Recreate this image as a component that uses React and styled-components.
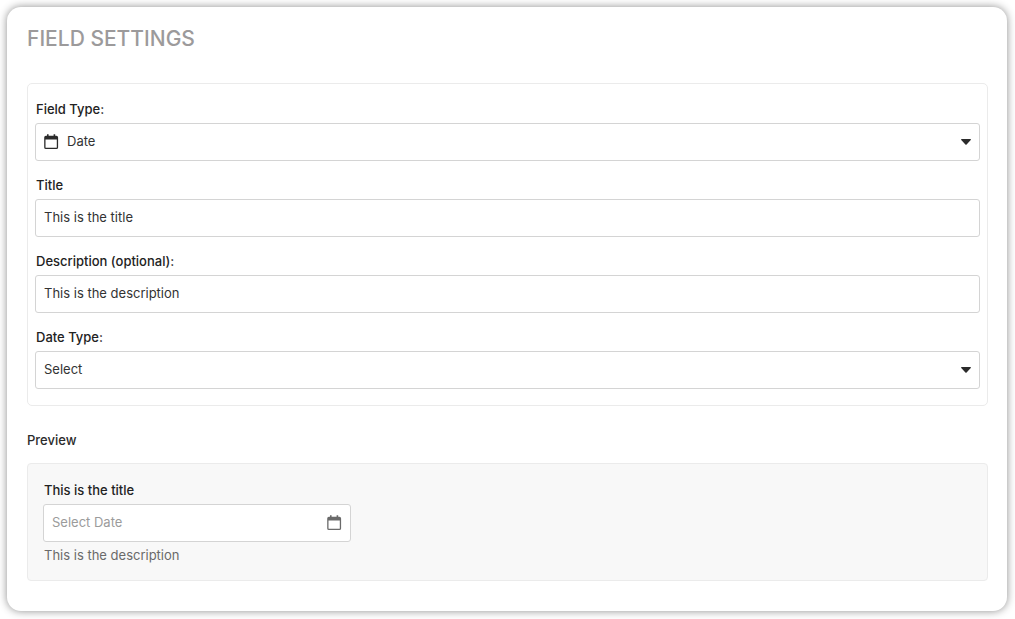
import React from "react";
import styled, { createGlobalStyle, css } from "styled-components";

const GlobalStyle = createGlobalStyle`
  *, *::before, *::after { box-sizing: border-box; }
  body {
    margin: 0;
    background: #fff;
    color: #2b2b2b;
    font-family: Inter, "Liberation Sans", sans-serif;
    font-size: 13px;
    line-height: 20px;
  }
`;

const Card = styled.main`
  margin: 7px 8px 8px 7px;
  padding: 18px 19px 30px 20px;
  background: #fff;
  border-radius: 14px;
  box-shadow: 0 0 9px rgba(0, 0, 0, 0.45);
`;

const Heading = styled.h1`
  margin: 0 0 30px;
  color: #9c9a9b;
  font-size: 21px;
  font-weight: 500;
  line-height: 28px;
  text-transform: uppercase;
`;

const Panel = styled.form`
  display: flex;
  flex-direction: column;
  gap: 14px;
  padding: 15px 7px 16px;
  border: 1px solid #ebebeb;
  border-radius: 5px;
`;

const PreviewHeading = styled.h2`
  margin: 24px 0 13px;
  font-size: 13px;
  font-weight: 500;
  line-height: 20px;
`;

const PreviewPanel = styled.section`
  padding: 16px 15px 15px;
  background: #f8f8f8;
  border: 1px solid #ebebeb;
  border-radius: 4px;
`;

const Field = styled.div`
  display: flex;
  flex-direction: column;
  gap: 4px;
  width: ${(p) => p.$width || "100%"};
  max-width: 100%;
`;

const Label = styled.label`
  padding-left: 1px;
  color: #222;
  font-weight: 500;
`;

const ControlWrap = styled.div`
  position: relative;
  display: flex;
  color: ${(p) => p.$color || "#2b2b2b"};
`;

const controlStyle = css`
  width: 100%;
  height: 38px;
  margin: 0;
  padding: 0 8px 2px;
  border: 1px solid #d4d4d4;
  border-radius: 3px;
  background: #fff;
  color: #333;
  font: inherit;
  outline: none;
  &:focus-visible { border-color: #777; }
`;

const Input = styled.input`
  ${controlStyle}
  &::placeholder { color: #9b9b9b; opacity: 1; }
`;

const Select = styled.select`
  ${controlStyle}
  appearance: none;
  padding-left: ${(p) => (p.$icon ? "31px" : "8px")};
  padding-right: 28px;
`;

const Adornment = styled.span`
  position: absolute;
  top: 0;
  bottom: 0;
  ${(p) => p.$side}: 9px;
  display: flex;
  align-items: center;
  pointer-events: none;
`;

const Hint = styled.p`
  margin: 3px 0 0;
  padding-left: 1px;
  color: #6a6a6a;
`;

const CalendarIcon = () => (
  <svg width="15" height="16" viewBox="0 0 15 16" aria-hidden="true">
    <path
      fill="currentColor"
      fillRule="evenodd"
      d="M3 0.300h1.600v1.400h5V0.300h1.600v1.400H12.400A1.700 1.700 0 0 1 14.100 3.400v10a1.700 1.700 0 0 1-1.700 1.700H1.900A1.700 1.700 0 0 1 0.200 13.400v-10A1.700 1.700 0 0 1 1.900 1.700H3zM1.500 5.500v7.700a0.600 0.600 0 0 0 0.600 0.600h10.100a0.600 0.600 0 0 0 0.600-0.600V5.500z"
    />
  </svg>
);

const Caret = () => (
  <svg width="10" height="6" viewBox="0 0 10 6" aria-hidden="true">
    <path
      fill="currentColor"
      d="M0.700 0h8.600a0.600 0.600 0 0 1 0.450 1L5.600 5.500a0.900 0.900 0 0 1-1.200 0L0.250 1A0.600 0.600 0 0 1 0.700 0z"
    />
  </svg>
);

export default function App() {
  return (
    <>
      <GlobalStyle />
      <Card>
        <Heading>Field Settings</Heading>
        <Panel>
          <Field>
            <Label htmlFor="field-type">Field Type:</Label>
            <ControlWrap>
              <Select id="field-type" $icon defaultValue="date">
                <option value="date">Date</option>
              </Select>
              <Adornment $side="left"><CalendarIcon /></Adornment>
              <Adornment $side="right"><Caret /></Adornment>
            </ControlWrap>
          </Field>
          <Field>
            <Label htmlFor="field-title">Title</Label>
            <Input id="field-title" type="text" defaultValue="This is the title" />
          </Field>
          <Field>
            <Label htmlFor="field-description">Description (optional):</Label>
            <Input id="field-description" type="text" defaultValue="This is the description" />
          </Field>
          <Field>
            <Label htmlFor="date-type">Date Type:</Label>
            <ControlWrap>
              <Select id="date-type" defaultValue="">
                <option value="">Select</option>
              </Select>
              <Adornment $side="right"><Caret /></Adornment>
            </ControlWrap>
          </Field>
        </Panel>
        <PreviewHeading>Preview</PreviewHeading>
        <PreviewPanel>
          <Field $width="308px">
            <Label htmlFor="preview-date">This is the title</Label>
            <ControlWrap $color="#6a6a6a">
              <Input id="preview-date" type="text" placeholder="Select Date" />
              <Adornment $side="right"><CalendarIcon /></Adornment>
            </ControlWrap>
          </Field>
          <Hint>This is the description</Hint>
        </PreviewPanel>
      </Card>
    </>
  );
}
